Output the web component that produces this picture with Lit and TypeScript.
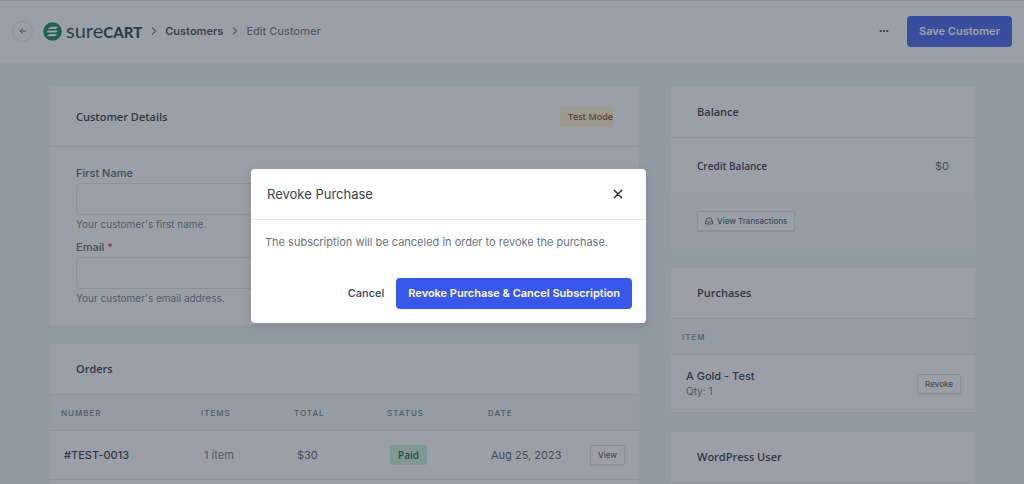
import { LitElement, html, css, svg } from "lit";
import { customElement, property, state } from "lit/decorators.js";

const chevron = html`<svg class="chevron" viewBox="0 0 10 10" aria-hidden="true">
  <path d="M3.5 2 6.500 5 3.500 8" fill="none" stroke="currentColor" stroke-width="1.2" stroke-linecap="round" stroke-linejoin="round" />
</svg>`;

interface Order {
  number: string;
  items: string;
  total: string;
  status: string;
  date: string;
}

@customElement("sc-logo")
class ScLogo extends LitElement {
  static styles = css`
    :host {
      display: flex;
      align-items: center;
      gap: 4px;
      color: #0f3d4a;
    }
    .mark {
      width: 19px;
      height: 19px;
    }
    .word {
      display: flex;
      align-items: baseline;
      font-family: Lato, "Open Sans", sans-serif;
      line-height: 20px;
    }
    .sure {
      font-size: 20px;
    }
    .cart {
      font-size: 15px;
      font-weight: 900;
    }
  `;

  render() {
    return html`
      <svg class="mark" viewBox="0 0 38 38" aria-hidden="true">
        ${svg`
          <circle cx="19" cy="19" r="18.5" fill="#00824c" />
          <path d="M16.5 9.5H30l-3 3.4q-1.2 1.3-3 1.3H9.8l3-3q1.6-1.7 3.7-1.7z" fill="#fff" />
          <path d="M9 17h19.5q1.8 0 .4 1.6l-1.3 1.3q-1.2 1.2-3 1.2H9q-2.2 0-.6-1.7z" fill="#fff" />
          <path d="M14 24h14.3l-3 3q-1.700 1.700-3.800 1.700H8l3-3.400q1.200-1.300 3-1.300z" fill="#fff" />
        `}
      </svg>
      <span class="word"><span class="sure">sure</span><span class="cart">CART</span></span>
    `;
  }
}

@customElement("sc-card")
class ScCard extends LitElement {
  @property() heading = "";
  @property({ type: Boolean, reflect: true }) roomy = false;

  static styles = css`
    :host {
      display: block;
      background: #fff;
    }
    .head {
      display: flex;
      align-items: center;
      justify-content: space-between;
      box-sizing: border-box;
      min-height: 51px;
      padding: 0 26px;
      border-bottom: 1px solid #e4e9f0;
    }
    :host([roomy]) .head {
      min-height: 60px;
    }
    .title {
      margin: 0;
      font: 600 11px/20px "Open Sans", "Noto Sans", sans-serif;
      color: #1f2937;
    }
  `;

  render() {
    return html`
      <header class="head">
        <h2 class="title">${this.heading}</h2>
        <slot name="extra"></slot>
      </header>
      <slot></slot>
    `;
  }
}

@customElement("app-root")
class AppRoot extends LitElement {
  @state() private open = true;

  private orders: Order[] = [
    { number: "#TEST-0013", items: "1 item", total: "$30", status: "Paid", date: "Aug 25, 2023" },
  ];

  static styles = css`
    :host {
      display: block;
      position: relative;
      height: 100vh;
      overflow: hidden;
      background: #edf3f7;
      color: #4b5563;
      font: 11px/16px Inter, "Liberation Sans", sans-serif;
    }
    button,
    input {
      font: inherit;
      color: inherit;
      box-sizing: border-box;
    }
    button {
      cursor: pointer;
    }

    .topbar {
      display: flex;
      align-items: center;
      justify-content: space-between;
      box-sizing: border-box;
      height: 63px;
      padding: 0 12px 2px;
      border-top: 1px solid #e2e5ea;
      background: #fff;
    }
    .crumbs,
    .actions {
      display: flex;
      align-items: center;
    }
    .back {
      display: grid;
      place-items: center;
      box-sizing: border-box;
      width: 21px;
      height: 21px;
      margin-right: 10px;
      border: 1px solid #e1e5ee;
      border-radius: 50%;
      color: #4b5563;
    }
    .back svg {
      width: 8px;
      height: 8px;
    }
    .chevron {
      width: 10px;
      height: 10px;
      margin: 0 6px 0 7px;
      color: #6b7280;
    }
    .crumb {
      color: #6b7280;
      font-weight: 500;
      text-decoration: none;
    }
    .crumb.link {
      font-weight: 600;
      color: #374151;
    }
    .more {
      display: grid;
      place-items: center;
      width: 24px;
      height: 24px;
      margin-right: 11px;
      padding: 0;
      border: 0;
      background: none;
      color: #1f2937;
    }
    .more svg {
      width: 10px;
      height: 4px;
    }
    .primary {
      height: 31px;
      padding: 0 12px;
      border: 0;
      border-radius: 4px;
      background: #3858e9;
      color: #fff;
      font-weight: 600;
      white-space: nowrap;
    }

    .page {
      display: grid;
      grid-template-columns: minmax(0, 1fr) 304px;
      gap: 32px;
      align-items: start;
      padding: 24px 49px 0 50px;
    }
    .main,
    .side {
      display: grid;
      gap: 19px;
    }

    .badge {
      border-radius: 3px;
      font: 600 9px/20px "Open Sans", "Noto Sans", sans-serif;
    }
    .badge.test {
      padding-left: 8px;
      background: #fef3c7;
      color: #92400e;
    }
    .badge.paid {
      display: inline-block;
      padding: 0 8px;
      background: #c9efd6;
      color: #14532d;
      font-size: 10px;
    }

    .form {
      display: grid;
      gap: 7px;
      padding: 18px 26px 19px;
    }
    .field {
      display: grid;
    }
    .label {
      color: #4b5563;
      font-weight: 500;
    }
    .required {
      color: #dc2626;
    }
    .input {
      width: 100%;
      height: 32px;
      margin: 2px 0 1px;
      padding: 0 10px;
      border: 1px solid #dde1ec;
      border-radius: 4px;
      background: #fff;
    }
    .help {
      font-size: 10px;
      line-height: 16px;
      color: #6b7280;
    }

    .table {
      width: 100%;
      border-collapse: collapse;
      table-layout: fixed;
      text-align: left;
    }
    .table th {
      height: 35px;
      padding: 0 11px;
      border-bottom: 1px solid #e4e9f0;
      background: #f3f7f9;
      color: #6b7280;
      font-size: 8px;
      font-weight: 500;
      letter-spacing: 1px;
      text-transform: uppercase;
    }
    .table td {
      height: 48px;
      padding: 0 0 0 14px;
      border-bottom: 1px solid #e4e9f0;
      white-space: nowrap;
    }
    .orders {
      padding-bottom: 30px;
    }
    .c-number {
      width: 140px;
    }
    .c-mid {
      width: 93px;
    }
    .c-status {
      width: 101px;
    }
    .c-action {
      width: 64px;
    }
    .strong {
      color: #1f2937;
      font-weight: 500;
    }
    .muted {
      color: #6b7280;
    }
    .table .end {
      padding: 0 14px;
      text-align: right;
    }

    .small {
      display: inline-flex;
      align-items: center;
      justify-content: center;
      gap: 4px;
      height: 20px;
      padding: 0 7px;
      border: 1px solid #d9deea;
      border-radius: 2px;
      background: #fff;
      box-shadow: 0 1px 1px #dde1ea;
      font-size: 8px;
      font-weight: 500;
      line-height: 12px;
      white-space: nowrap;
    }
    .small svg {
      width: 8px;
      height: 8px;
    }

    .credit {
      display: flex;
      align-items: center;
      justify-content: space-between;
      height: 55px;
      padding: 0 26px;
    }
    .credit .name {
      font: 600 10px/16px "Open Sans", "Noto Sans", sans-serif;
      color: #1f2937;
    }
    .foot {
      display: flex;
      align-items: center;
      height: 56px;
      padding: 0 26px;
      background: #f5f8f9;
    }
    .purchase td {
      height: 57px;
      padding: 0 15px;
    }
    .purchase .product {
      display: block;
      line-height: 15px;
    }
    .purchase .qty {
      display: block;
      font-size: 10px;
      line-height: 15px;
      color: #6b7280;
    }
    .filler {
      height: 60px;
    }

    .overlay {
      position: absolute;
      inset: 0;
      display: grid;
      place-items: center;
      padding: 7px 127px 0 0;
      background: rgba(55, 65, 81, 0.5);
    }
    .dialog {
      width: 395px;
      border-radius: 4px;
      background: #fff;
      box-shadow: 0 3px 8px rgba(31, 41, 55, 0.18);
    }
    .dialog-head {
      display: flex;
      align-items: center;
      justify-content: space-between;
      height: 50px;
      padding: 0 18px 0 16px;
      border-bottom: 1px solid #e5e7eb;
    }
    .dialog-title {
      margin: 0;
      font-size: 13px;
      font-weight: 400;
      color: #374151;
    }
    .close {
      display: grid;
      place-items: center;
      width: 20px;
      height: 20px;
      padding: 0;
      border: 0;
      background: none;
      color: #1f2937;
    }
    .close svg {
      width: 10px;
      height: 10px;
    }
    .dialog-body {
      margin: 0;
      padding: 14px 14px 0;
      color: #6b7280;
    }
    .dialog-foot {
      display: flex;
      align-items: center;
      justify-content: flex-end;
      gap: 12px;
      padding: 28px 14px 14px;
    }
    .plain {
      padding: 0;
      border: 0;
      background: none;
      color: #374151;
      font-weight: 500;
    }
  `;

  private close() {
    this.open = false;
  }

  private renderOrder(o: Order) {
    return html`<tr>
      <td class="strong">${o.number}</td>
      <td class="muted">${o.items}</td>
      <td>${o.total}</td>
      <td><span class="badge paid">${o.status}</span></td>
      <td>${o.date}</td>
      <td class="end"><button class="small">View</button></td>
    </tr>`;
  }

  private renderDialog() {
    return html`<div class="overlay">
      <section class="dialog" role="dialog" aria-modal="true" aria-labelledby="dialog-title">
        <header class="dialog-head">
          <h2 class="dialog-title" id="dialog-title">Revoke Purchase</h2>
          <button class="close" aria-label="Close" @click=${this.close}>
            <svg viewBox="0 0 10 10" aria-hidden="true">
              <path d="M1.3 1.3 8.7 8.7M8.7 1.3 1.3 8.7" stroke="currentColor" stroke-width="1.4" stroke-linecap="round" />
            </svg>
          </button>
        </header>
        <p class="dialog-body">The subscription will be canceled in order to revoke the purchase.</p>
        <footer class="dialog-foot">
          <button class="plain" @click=${this.close}>Cancel</button>
          <button class="primary" @click=${this.close}>Revoke Purchase &amp; Cancel Subscription</button>
        </footer>
      </section>
    </div>`;
  }

  render() {
    return html`
      <header class="topbar">
        <nav class="crumbs" aria-label="Breadcrumb">
          <a class="back" href="#" aria-label="Back">
            <svg viewBox="0 0 10 10" aria-hidden="true">
              <path d="M8.8 5H1.5M4.5 2 1.4 5l3.1 3" fill="none" stroke="currentColor" stroke-width="1.2" stroke-linecap="round" stroke-linejoin="round" />
            </svg>
          </a>
          <sc-logo></sc-logo>
          ${chevron}
          <a class="crumb link" href="#">Customers</a>
          ${chevron}
          <span class="crumb">Edit Customer</span>
        </nav>
        <div class="actions">
          <button class="more" aria-label="More actions">
            <svg viewBox="0 0 10 4" aria-hidden="true">
              <circle cx="1.7" cy="2" r="1.1" fill="currentColor" />
              <circle cx="5" cy="2" r="1.1" fill="currentColor" />
              <circle cx="8.3" cy="2" r="1.1" fill="currentColor" />
            </svg>
          </button>
          <button class="primary">Save Customer</button>
        </div>
      </header>

      <main class="page">
        <div class="main">
          <sc-card heading="Customer Details" roomy>
            <span class="badge test" slot="extra">Test Mode</span>
            <form class="form">
              <div class="field">
                <label class="label" for="first">First Name</label>
                <input class="input" id="first" type="text" />
                <span class="help">Your customer's first name.</span>
              </div>
              <div class="field">
                <label class="label" for="email">Email <span class="required">*</span></label>
                <input class="input" id="email" type="email" />
                <span class="help">Your customer's email address.</span>
              </div>
            </form>
          </sc-card>
          <sc-card heading="Orders">
            <div class="orders">
              <table class="table">
                <colgroup>
                  <col class="c-number" />
                  <col class="c-mid" />
                  <col class="c-mid" />
                  <col class="c-status" />
                  <col />
                  <col class="c-action" />
                </colgroup>
                <thead>
                  <tr>
                    <th>Number</th>
                    <th>Items</th>
                    <th>Total</th>
                    <th>Status</th>
                    <th>Date</th>
                    <th></th>
                  </tr>
                </thead>
                <tbody>
                  ${this.orders.map((o) => this.renderOrder(o))}
                </tbody>
              </table>
            </div>
          </sc-card>
        </div>

        <aside class="side">
          <sc-card heading="Balance">
            <div class="credit"><span class="name">Credit Balance</span><span>$0</span></div>
            <div class="foot">
              <button class="small">
                <svg viewBox="0 0 16 16" aria-hidden="true">
                  <path d="M1 8.5 4.2 2h7.6L15 8.5V14H1zM1 8.5h4l1.2 2h3.6l1.2-2h4" fill="none" stroke="currentColor" stroke-width="1.8" stroke-linejoin="round" />
                </svg>
                View Transactions
              </button>
            </div>
          </sc-card>
          <sc-card heading="Purchases">
            <table class="table purchase">
              <thead>
                <tr>
                  <th>Item</th>
                  <th></th>
                </tr>
              </thead>
              <tbody>
                <tr>
                  <td><span class="product strong">A Gold - Test</span><span class="qty">Qty: 1</span></td>
                  <td class="end"><button class="small">Revoke</button></td>
                </tr>
              </tbody>
            </table>
          </sc-card>
          <sc-card heading="WordPress User"><div class="filler"></div></sc-card>
        </aside>
      </main>
      ${this.open ? this.renderDialog() : null}
    `;
  }
}
